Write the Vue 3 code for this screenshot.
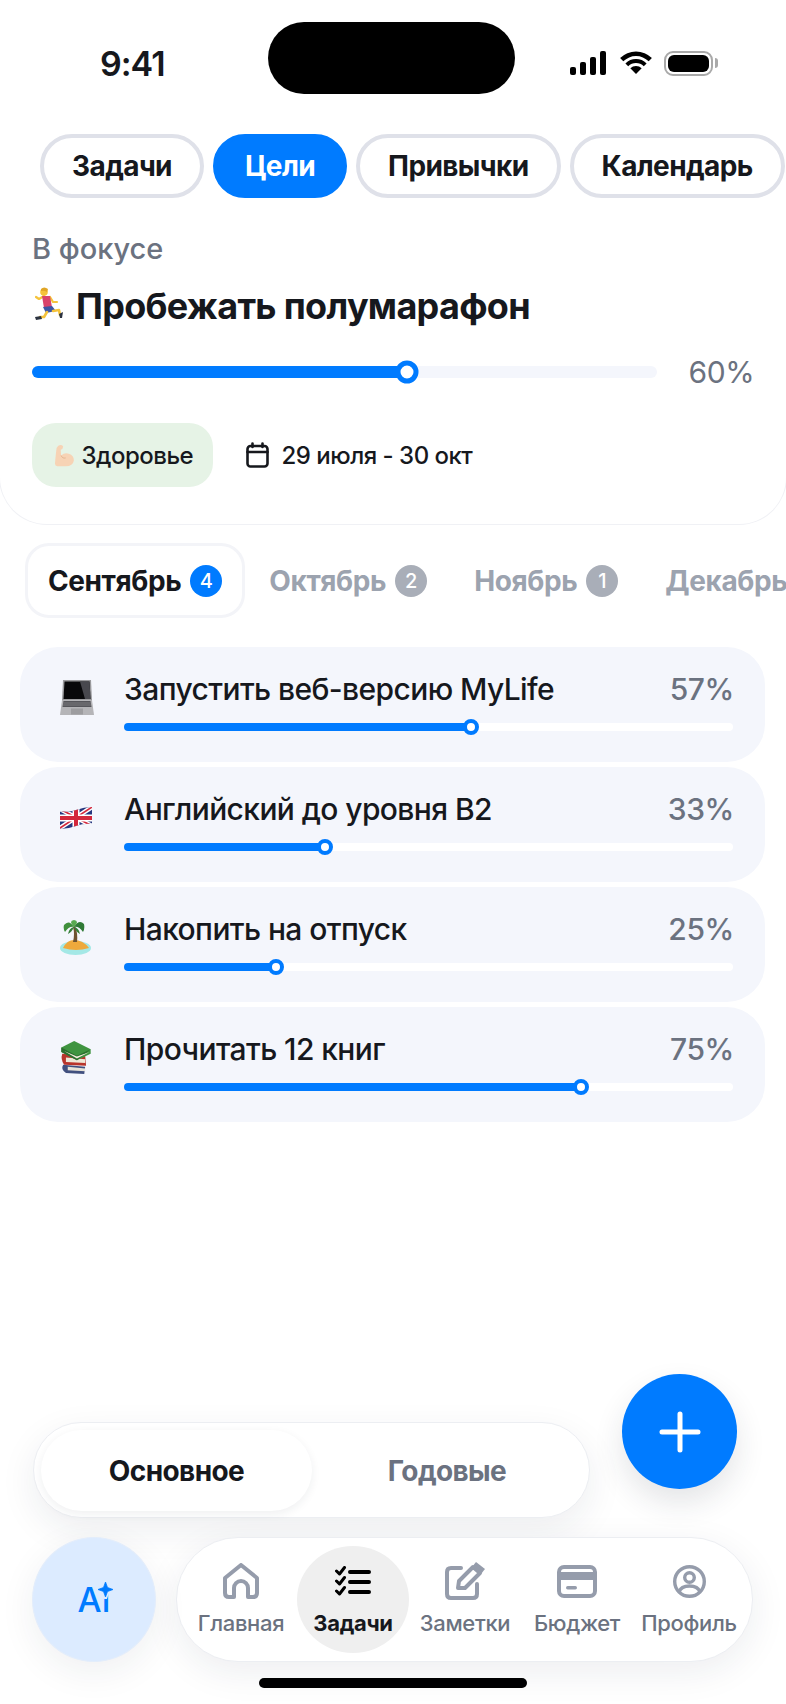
<script setup>
const tabs = [
  { name: 'Задачи' },
  { name: 'Цели', active: true },
  { name: 'Привычки' },
  { name: 'Календарь' },
]

const months = [
  { name: 'Сентябрь', count: 4, active: true },
  { name: 'Октябрь', count: 2 },
  { name: 'Ноябрь', count: 1 },
  { name: 'Декабрь' },
]

const goals = [
  { icon: 'laptop', title: 'Запустить веб-версию MyLife', label: '57%', value: 57 },
  { icon: 'flag', title: 'Английский до уровня В2', label: '33%', value: 33 },
  { icon: 'island', title: 'Накопить на отпуск', label: '25%', value: 25 },
  { icon: 'books', title: 'Прочитать 12 книг', label: '75%', value: 75 },
]

const nav = [
  { name: 'Главная', icon: 'home' },
  { name: 'Задачи', icon: 'tasks', active: true },
  { name: 'Заметки', icon: 'notes' },
  { name: 'Бюджет', icon: 'card' },
  { name: 'Профиль', icon: 'profile' },
]
</script>

<template>
  <div class="page">
    <header class="status">
      <span class="time">9:41</span>
      <div class="island"></div>
      <div class="status-icons">
        <svg class="signal" width="36" height="24" viewBox="0 0 36 24">
          <rect x="0" y="16" width="6" height="8" rx="2" />
          <rect x="10" y="11" width="6" height="13" rx="2" />
          <rect x="20" y="6" width="6" height="18" rx="2" />
          <rect x="30" y="0" width="6" height="24" rx="2" />
        </svg>
        <svg class="wifi" width="32" height="24" viewBox="0 -1 32 24">
          <path d="M16 22 L10.34 16.34 A8 8 0 0 1 21.66 16.34 Z" />
          <path d="M8.22 14.22 A11 11 0 0 1 23.78 14.22 L26.6 11.39 A15 15 0 0 0 5.4 11.39 Z" />
          <path d="M3.3 9.27 A18 18 0 0 1 28.7 9.27 L31.9 6.09 A22.5 22.5 0 0 0 0.1 6.09 Z" />
        </svg>
        <div class="battery"><i></i></div>
        <div class="battery-cap"></div>
      </div>
    </header>

    <nav class="tabs">
      <button v-for="t in tabs" :key="t.name" class="tab" :class="{ active: t.active }">{{ t.name }}</button>
    </nav>

    <div class="focus-label">В фокусе</div>

    <section class="focus-card">
      <h1 class="focus-title">
        <svg class="emoji-run" width="28" height="33" viewBox="0 0 28 33">
          <path d="M9 9 L4 12 L1 10" stroke="#f5c33b" stroke-width="2.2" fill="none" stroke-linecap="round" stroke-linejoin="round" />
          <path d="M15 10 L18 15 L22 15" stroke="#f5c33b" stroke-width="2.2" fill="none" stroke-linecap="round" stroke-linejoin="round" />
          <circle cx="9" cy="5" r="3.8" fill="#f5c33b" />
          <path d="M6 2 Q9 -1 13 2 L12 5 Q9 3 6 4 Z" fill="#e0a526" />
          <path d="M7 9 L15 9 L17 20 L9 21 Z" fill="#d9426b" />
          <path d="M8 20 L17 19 L21 24 L11 26 Z" fill="#3c55a5" />
          <path d="M18 24 L24 23 L25 28" stroke="#f5c33b" stroke-width="2.6" fill="none" stroke-linecap="round" stroke-linejoin="round" />
          <path d="M12 25 L9 30 L5 30" stroke="#f5c33b" stroke-width="2.6" fill="none" stroke-linecap="round" stroke-linejoin="round" />
          <path d="M24 27 L28 25 L27 31 L25 31 Z" fill="#2c3340" />
          <path d="M0 30 L6 29 L7 32 L1 33 Z" fill="#2c3340" />
        </svg>
        Пробежать полумарафон
      </h1>

      <div class="focus-progress">
        <div class="track big">
          <div class="fill" :style="{ width: '60%' }">
            <span class="knob"></span>
          </div>
        </div>
        <span class="focus-pct">60%</span>
      </div>

      <div class="focus-meta">
        <div class="chip">
          <svg width="22" height="23" viewBox="0 0 26 28">
            <path d="M6 2 Q10 0 12 3 L11 6 L9 7 L9.5 14 Q14 10 19 12 Q25 14 25 20 Q24 27 15 27 L5 27 Q2 27 2 24 Q3 12 4 5 Z" fill="#f7d3b5" />
            <path d="M9.5 14 Q11 18 15 17" stroke="#dfae8a" stroke-width="1" fill="none" />
          </svg>
          <span>Здоровье</span>
        </div>
        <div class="dates">
          <svg width="23" height="26" viewBox="0 0 23 26" fill="none" stroke="#16181d" stroke-width="2.6" stroke-linecap="round">
            <rect x="1.5" y="4" width="20" height="20.5" rx="3" />
            <path d="M1.5 10 H21.5 M6.5 1.5 V5 M16.5 1.5 V5" />
          </svg>
          <span>29 июля - 30 окт</span>
        </div>
      </div>
    </section>

    <div class="months">
      <div v-for="m in months" :key="m.name" class="month" :class="{ active: m.active }">
        <span>{{ m.name }}</span>
        <span v-if="m.count" class="badge">{{ m.count }}</span>
      </div>
    </div>

    <div class="goals">
      <div v-for="g in goals" :key="g.title" class="goal">
        <div class="goal-icon">
          <svg v-if="g.icon === 'laptop'" width="34" height="35" viewBox="0 0 34 35">
            <path d="M3 0 H31 L32 20 H2 Z" fill="#9a9a9d" />
            <path d="M4.5 1.5 H29.5 L30.5 19 H3.5 Z" fill="#08080a" />
            <path d="M20 1.5 H29.5 L30.5 19 H25 Z" fill="#48484e" />
            <path d="M2 20 H32 L34 35 H0 Z" fill="#b5b5b8" />
            <path d="M3.5 21 H30.5 L31.5 27 H2.5 Z" fill="#55555a" />
            <path d="M3.4 23 H30.6 M3 25 H31" stroke="#8c8c90" stroke-width="0.7" />
            <rect x="11" y="28.5" width="12" height="6" fill="#9d9da0" />
          </svg>
          <svg v-else-if="g.icon === 'flag'" width="32" height="23" viewBox="0 0 32 23">
            <clipPath id="flag-wave">
              <path d="M0 5 Q8 7 16 4 T32 1 V18 Q24 17 16 20 T0 23 Z" />
            </clipPath>
            <g clip-path="url(#flag-wave)">
              <rect width="32" height="23" fill="#26377f" />
              <path d="M0 3 L32 20 M32 1 L0 22" stroke="#fff" stroke-width="4.5" />
              <path d="M0 3 L32 20 M32 1 L0 22" stroke="#d3283c" stroke-width="1.6" />
              <path d="M16 0 V23 M0 12 H32" stroke="#fff" stroke-width="7" />
              <path d="M16 0 V23 M0 12 H32" stroke="#d3283c" stroke-width="4" />
            </g>
          </svg>
          <svg v-else-if="g.icon === 'island'" width="31" height="35" viewBox="0 0 31 35">
            <ellipse cx="15.5" cy="28" rx="15.5" ry="7" fill="#a4e8e6" />
            <path d="M3 28 Q7 20 14 20 Q23 20 29 28 Q16 32 3 28 Z" fill="#eea93c" />
            <path d="M13 7 Q15 14 13 22 L17 22 Q18 13 15 6 Z" fill="#6d5230" />
            <path d="M14 7 Q9 -1 4 5 Q3 9 5 12 Q9 6 14 7 Z" fill="#3f8f3c" />
            <path d="M14 7 Q19 -1 24 4 Q25 9 23 12 Q19 6 14 7 Z" fill="#2f7a36" />
            <path d="M14 7 Q8 1 14 0 Q20 1 14 7 Z" fill="#58a94f" />
            <path d="M14 7 Q9 8 8 14 Q12 12 14 7 Z M14 7 Q19 8 20 14 Q16 12 14 7 Z" fill="#357f38" />
          </svg>
          <svg v-else width="32" height="33" viewBox="0 0 34 36">
            <path d="M3 26 L27 28 L26 36 L6 35 Q0 31 3 26 Z" fill="#41507f" />
            <path d="M8 28 L27 30 L27 33 L8 32 Z" fill="#e8e4d8" />
            <path d="M2 14 L27 16 L28 27 L4 26 Q0 20 2 14 Z" fill="#b8352c" />
            <path d="M6 18 L27 20 L27 24 L6 23 Z" fill="#efe9d8" />
            <path d="M1 7 L15 0 L33 9 L33 14 L18 21 L1 12 Z" fill="#3f9440" />
            <path d="M1 7 L18 16 L33 9 L18 21 L1 12 Z" fill="#2b6e2e" />
            <path d="M4 11 L18 19 L32 12 L18 17 Z" fill="#f2ecdc" />
          </svg>
        </div>
        <div class="goal-body">
          <div class="goal-head">
            <span class="goal-title">{{ g.title }}</span>
            <span class="goal-pct">{{ g.label }}</span>
          </div>
          <div class="track small">
            <div class="fill" :style="{ width: g.value + '%' }">
              <span class="knob"></span>
            </div>
          </div>
        </div>
      </div>
    </div>

    <div class="dock">
      <div class="dock-top">
        <div class="segment">
          <div class="seg-item active">Основное</div>
          <div class="seg-item">Годовые</div>
        </div>
        <button class="fab">
          <svg width="42" height="42" viewBox="0 0 42 42" stroke="#fff" stroke-width="5" stroke-linecap="round">
            <path d="M21 3 V39 M3 21 H39" />
          </svg>
        </button>
      </div>

      <div class="dock-bottom">
        <button class="ai">
          <span class="ai-text">Ai</span>
          <svg class="ai-star" width="19" height="19" viewBox="-2 -2 19 19">
            <path d="M7.5 0 L9.5 5.5 L15 7.5 L9.5 9.5 L7.5 15 L5.5 9.5 L0 7.5 L5.5 5.5 Z" fill="#dcebff" stroke="#dcebff" stroke-width="4" />
            <path d="M7.5 0 L9.5 5.5 L15 7.5 L9.5 9.5 L7.5 15 L5.5 9.5 L0 7.5 L5.5 5.5 Z" fill="#007bff" stroke="#007bff" stroke-width="0.8" stroke-linejoin="round" />
          </svg>
        </button>
        <div class="nav">
          <div v-for="n in nav" :key="n.name" class="nav-item" :class="{ active: n.active }">
            <div class="nav-icon">
              <svg v-if="n.icon === 'home'" width="36" height="36" viewBox="0 0 36 36" fill="none" stroke="#959cab" stroke-width="4" stroke-linejoin="round">
                <path d="M2 15 L18 2 L34 15 V30 Q34 34 30 34 H25 V25 A7 7 0 0 0 11 25 V34 H6 Q2 34 2 30 Z" />
              </svg>
              <svg v-else-if="n.icon === 'tasks'" width="36" height="31" viewBox="0 0 36 31" fill="none" stroke="#000" stroke-linecap="round" stroke-linejoin="round">
                <path d="M15 6 H34 M15 16 H34 M15 26 H34" stroke-width="4" />
                <path d="M1.5 5 L4.5 8 L9.5 1.5 M1.5 15 L4.5 18 L9.5 11.5 M1.5 25 L4.5 28 L9.5 21.5" stroke-width="3" />
              </svg>
              <svg v-else-if="n.icon === 'notes'" width="40" height="38" viewBox="0 0 40 38" fill="none" stroke="#959cab" stroke-width="4" stroke-linejoin="round" stroke-linecap="round">
                <path d="M16 6 H6 Q2 6 2 10 V32 Q2 36 6 36 H28 Q32 36 32 32 V22" />
                <path d="M13 26 L14 19 L28 5 L35 11 L20 26 Z" />
                <path d="M31 0 L40 7 L36 12 L27 5 Z" fill="#959cab" stroke="none" />
              </svg>
              <svg v-else-if="n.icon === 'card'" width="40" height="33" viewBox="0 0 40 33">
                <rect x="2" y="2" width="36" height="29" rx="5" fill="none" stroke="#959cab" stroke-width="4" />
                <rect x="2" y="7" width="36" height="8" fill="#959cab" />
                <rect x="9" y="21" width="11" height="3.5" rx="1.7" fill="#959cab" />
              </svg>
              <svg v-else width="33" height="33" viewBox="0 0 33 33" fill="none" stroke="#959cab" stroke-width="3.4">
                <circle cx="16.5" cy="16.5" r="14.8" />
                <circle cx="16.5" cy="12.5" r="4.8" />
                <path d="M6 27 Q8 21 16.5 21 Q25 21 27 27" />
              </svg>
            </div>
            <span class="nav-label">{{ n.name }}</span>
          </div>
        </div>
      </div>

      <div class="home-bar"></div>
    </div>
  </div>
</template>

<style>
html, body {
  margin: 0;
  background: #fff;
}
</style>

<style scoped>
.page {
  width: 786px;
  height: 1704px;
  display: flex;
  flex-direction: column;
  overflow: hidden;
  background: #fff;
  font-family: Inter, "Noto Sans", sans-serif;
  color: #16181d;
}

.status {
  height: 72px;
  margin-top: 22px;
  display: flex;
  align-items: center;
  box-sizing: border-box;
  padding: 0 68px 0 100px;
}

.time {
  width: 168px;
  font-size: 34px;
  font-weight: 600;
  letter-spacing: -1px;
  margin-top: 10px;
}

.island {
  width: 247px;
  height: 72px;
  border-radius: 36px;
  background: #000;
}

.status-icons {
  margin-left: auto;
  display: flex;
  align-items: center;
  margin-top: 10px;
}

.status-icons svg {
  fill: #000;
}

.wifi {
  margin-left: 14px;
}

.battery {
  width: 49px;
  height: 25px;
  box-sizing: border-box;
  border: 2px solid #a9a9a9;
  border-radius: 9px;
  padding: 2px;
  margin-left: 12px;
}

.battery i {
  display: block;
  height: 100%;
  background: #000;
  border-radius: 6px;
}

.battery-cap {
  width: 3px;
  height: 10px;
  margin-left: 2px;
  background: #a9a9a9;
  border-radius: 0 3px 3px 0;
}

.tabs {
  display: flex;
  gap: 9px;
  margin-top: 40px;
  padding-left: 40px;
}

.tab {
  height: 64px;
  box-sizing: border-box;
  padding: 0 28px;
  border: 4px solid #dfe1e9;
  border-radius: 32px;
  background: #fff;
  font: 700 28px Inter, sans-serif;
  letter-spacing: -0.6px;
  color: #16181d;
  white-space: nowrap;
}

.tab.active {
  background: #007bff;
  border-color: #007bff;
  color: #fff;
}

.focus-label {
  margin: 33px 0 0 32px;
  font-size: 29px;
  font-weight: 500;
  line-height: 36px;
  color: #6b7280;
  letter-spacing: 0;
}

.focus-card {
  margin: 19px -1px 0;
  padding: 0 32.5px 0 31.5px;
  height: 239px;
  box-sizing: border-box;
  background: #fff;
  border: 1.5px solid #f0f1f5;
  border-top: 0;
  border-radius: 0 0 48px 48px;
}

.focus-title {
  display: flex;
  align-items: center;
  gap: 13px;
  height: 42px;
  margin: -1px 0 1px;
  font-size: 36px;
  font-weight: 700;
  letter-spacing: -0.7px;
  white-space: nowrap;
}

.emoji-run {
  flex: none;
  margin: -6px 0 0 3.5px;
}

.focus-progress {
  display: flex;
  align-items: center;
  gap: 32px;
  margin-top: 33px;
  height: 24px;
}

.track {
  flex: 1;
  min-width: 0;
  border-radius: 6px;
}

.track.big {
  height: 12px;
  background: #f4f6fc;
}

.track.small {
  height: 8px;
  background: #fff;
}

.fill {
  position: relative;
  height: 100%;
  background: #007bff;
  border-radius: 6px;
}

.knob {
  position: absolute;
  right: 0;
  top: 50%;
  box-sizing: border-box;
  background: #fff;
  border-radius: 50%;
  transform: translate(50%, -50%);
}

.big .knob {
  width: 23px;
  height: 23px;
  border: 5.5px solid #007bff;
}

.small .knob {
  width: 16px;
  height: 16px;
  border: 4px solid #007bff;
}

.focus-pct {
  width: 65px;
  flex: none;
  font-size: 30px;
  font-weight: 400;
  color: #6b7280;
  letter-spacing: -0.4px;
}

.focus-meta {
  display: flex;
  align-items: center;
  gap: 33px;
  margin-top: 39px;
}

.chip {
  width: 181px;
  height: 64px;
  box-sizing: border-box;
  padding-left: 21px;
  display: flex;
  align-items: center;
  gap: 7px;
  background: #e6f3e6;
  border-radius: 24px;
  font-size: 24px;
  font-weight: 500;
  letter-spacing: -0.5px;
}

.dates {
  display: flex;
  align-items: center;
  gap: 13px;
  font-size: 24px;
  font-weight: 500;
  letter-spacing: -0.5px;
}

.months {
  display: flex;
  align-items: center;
  margin: 18px 0 0 25px;
  white-space: nowrap;
}

.month {
  display: flex;
  align-items: center;
  gap: 9px;
  height: 75px;
  box-sizing: border-box;
  padding: 0 20px;
  margin-right: 1px;
  border: 3px solid transparent;
  border-radius: 24px;
  font-size: 28px;
  font-weight: 700;
  letter-spacing: -0.4px;
  color: #9ca3af;
}

.month.active {
  border-color: #f3f4f8;
  color: #16181d;
}

.badge {
  width: 32px;
  height: 32px;
  border-radius: 50%;
  display: flex;
  align-items: center;
  justify-content: center;
  background: #a9aeb8;
  color: #fff;
  font-size: 20px;
  font-weight: 500;
  letter-spacing: 0;
}

.active .badge {
  background: #007bff;
}

.goals {
  display: flex;
  flex-direction: column;
  gap: 5px;
  margin: 29px 21px 0 20px;
}

.goal {
  height: 115px;
  display: flex;
  box-sizing: border-box;
  padding: 0 32px 0 40px;
  background: #f4f6fc;
  border-radius: 38px;
}

.goal-icon {
  width: 64px;
  flex: none;
  display: flex;
  justify-content: flex-start;
  align-items: center;
  padding-bottom: 15px;
}

.goal-body {
  flex: 1;
  min-width: 0;
  padding-top: 21px;
}

.goal-head {
  display: flex;
  justify-content: space-between;
  align-items: center;
  height: 42px;
}

.goal-title {
  font-size: 30px;
  font-weight: 500;
  letter-spacing: -0.6px;
}

.goal-pct {
  font-size: 30px;
  font-weight: 500;
  color: #6b7280;
  letter-spacing: -0.4px;
  margin-right: -1px;
}

.goal .track {
  margin-top: 13px;
}

.dock {
  margin-top: auto;
}

.dock-top {
  display: flex;
  align-items: flex-start;
  justify-content: space-between;
  padding: 0 49px 0 33px;
}

.segment {
  width: 557px;
  height: 96px;
  margin-top: 48px;
  box-sizing: border-box;
  padding: 7px;
  display: flex;
  background: #fff;
  border: 1px solid #eceef2;
  border-radius: 48px;
  box-shadow: 0 12px 36px rgba(30, 40, 60, 0.08);
}

.seg-item {
  width: 271px;
  height: 81px;
  display: flex;
  align-items: center;
  justify-content: center;
  border-radius: 41px;
  font-size: 28px;
  font-weight: 700;
  letter-spacing: -0.6px;
  color: #6b7280;
}

.seg-item.active {
  color: #16181d;
  box-shadow: 0 3px 10px rgba(30, 40, 60, 0.07);
}

.seg-item:last-child {
  flex: 1;
}

.fab {
  width: 115px;
  height: 115px;
  border: 0;
  padding: 0;
  border-radius: 50%;
  background: #007bff;
  display: flex;
  align-items: center;
  justify-content: center;
  box-shadow: 0 14px 30px rgba(30, 40, 60, 0.12);
}

.dock-bottom {
  display: flex;
  gap: 20px;
  margin-top: 19px;
  padding-left: 32px;
}

.ai {
  position: relative;
  width: 124px;
  height: 125px;
  border: 1px solid #e3edfb;
  border-radius: 50%;
  padding: 0;
  background: #dcebff;
  color: #007bff;
  box-shadow: 0 10px 36px rgba(30, 40, 60, 0.07);
}

.ai-text {
  font: 500 34px Inter, sans-serif;
  letter-spacing: 0;
}

.ai-star {
  position: absolute;
  left: 63px;
  top: 42px;
}

.nav {
  width: 577px;
  height: 125px;
  box-sizing: border-box;
  display: flex;
  padding: 8px;
  background: #fff;
  border: 1px solid #eceef2;
  border-radius: 62px;
  box-shadow: 0 10px 36px rgba(30, 40, 60, 0.08);
}

.nav-item {
  width: 112px;
  flex: none;
  height: 107px;
  display: flex;
  flex-direction: column;
  align-items: center;
  justify-content: flex-end;
  border-radius: 50%;
  white-space: nowrap;
  font-size: 22px;
  font-weight: 500;
  color: #6b7280;
  padding-bottom: 16px;
  box-sizing: border-box;
}

.nav-icon {
  height: 40px;
  display: flex;
  align-items: center;
  justify-content: center;
  margin-bottom: 8px;
}

.nav-item.active {
  background: #efefef;
  color: #16181d;
  font-weight: 700;
}

.nav-label {
  line-height: 28px;
  letter-spacing: -0.35px;
}

.home-bar {
  width: 268px;
  height: 10px;
  margin: 16px auto 16px;
  background: #000;
  border-radius: 5px;
}
</style>
